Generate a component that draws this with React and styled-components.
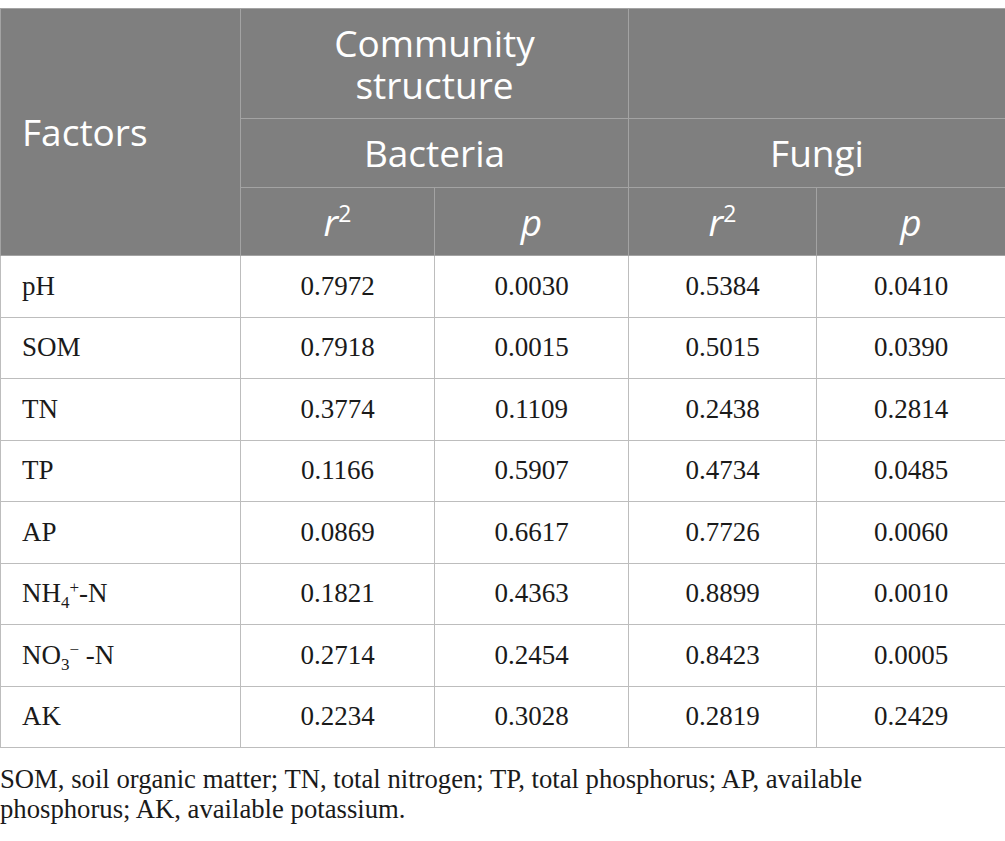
import React from "react";
import styled, { createGlobalStyle } from "styled-components";

const GlobalStyle = createGlobalStyle`
  html, body {
    margin: 0;
    padding: 0;
    background: #fff;
  }
`;

const Page = styled.div`
  padding-top: 8px;
  width: 1005px;
`;

const Table = styled.table`
  width: 1005px;
  table-layout: fixed;
  border-collapse: collapse;
`;

const HeadRow = styled.tr`
  height: ${(p) => p.height}px;
`;

const HeadCell = styled.th`
  background: #7f7f7f;
  color: #fff;
  font-family: "Open Sans", Lato, sans-serif;
  font-weight: 400;
  font-size: 37px;
  line-height: 42px;
  text-align: ${(p) => p.align || "center"};
  padding: 0 0 0 ${(p) => (p.align === "left" ? "21px" : "0")};
  border: 1px solid #a3a3a3;
  vertical-align: middle;
`;

const Italic = styled.i`
  font-style: italic;
`;

const HeadSup = styled.sup`
  font-size: 23px;
  line-height: 0;
  vertical-align: 14px;
`;

const BodyRow = styled.tr`
  height: 61.5px;
`;

const BodyCell = styled.td`
  font-family: "Liberation Serif", "Times New Roman", serif;
  font-size: 27px;
  color: #1a1a1a;
  text-align: ${(p) => p.align || "center"};
  padding: 0 0 0 ${(p) => (p.align === "left" ? "21px" : "0")};
  border: 1px solid #bdbdbd;
  vertical-align: middle;
`;

const Sub = styled.sub`
  font-size: 17px;
  line-height: 0;
  vertical-align: -6px;
`;

const Sup = styled.sup`
  font-size: 17px;
  line-height: 0;
  vertical-align: 9px;
`;

const Footnote = styled.p`
  margin: 16px 0 0;
  width: 900px;
  font-family: "Liberation Serif", "Times New Roman", serif;
  font-size: 26.7px;
  line-height: 30px;
  color: #1a1a1a;
`;

const rows = [
  { factor: "pH", values: ["0.7972", "0.0030", "0.5384", "0.0410"] },
  { factor: "SOM", values: ["0.7918", "0.0015", "0.5015", "0.0390"] },
  { factor: "TN", values: ["0.3774", "0.1109", "0.2438", "0.2814"] },
  { factor: "TP", values: ["0.1166", "0.5907", "0.4734", "0.0485"] },
  { factor: "AP", values: ["0.0869", "0.6617", "0.7726", "0.0060"] },
  {
    factor: (
      <>
        NH<Sub>4</Sub>
        <Sup>+</Sup>-N
      </>
    ),
    values: ["0.1821", "0.4363", "0.8899", "0.0010"],
  },
  {
    factor: (
      <>
        NO<Sub>3</Sub>
        <Sup>−</Sup> -N
      </>
    ),
    values: ["0.2714", "0.2454", "0.8423", "0.0005"],
  },
  { factor: "AK", values: ["0.2234", "0.3028", "0.2819", "0.2429"] },
];

function App() {
  return (
    <>
      <GlobalStyle />
      <Page>
        <Table>
          <colgroup>
            <col style={{ width: 240 }} />
            <col style={{ width: 194 }} />
            <col style={{ width: 194 }} />
            <col style={{ width: 188 }} />
            <col style={{ width: 189 }} />
          </colgroup>
          <thead>
            <HeadRow height={110}>
              <HeadCell rowSpan={3} align="left">
                Factors
              </HeadCell>
              <HeadCell colSpan={2}>
                Community
                <br />
                structure
              </HeadCell>
              <HeadCell colSpan={2} />
            </HeadRow>
            <HeadRow height={69}>
              <HeadCell colSpan={2}>Bacteria</HeadCell>
              <HeadCell colSpan={2}>Fungi</HeadCell>
            </HeadRow>
            <HeadRow height={68}>
              <HeadCell>
                <Italic>r</Italic>
                <HeadSup>2</HeadSup>
              </HeadCell>
              <HeadCell>
                <Italic>p</Italic>
              </HeadCell>
              <HeadCell>
                <Italic>r</Italic>
                <HeadSup>2</HeadSup>
              </HeadCell>
              <HeadCell>
                <Italic>p</Italic>
              </HeadCell>
            </HeadRow>
          </thead>
          <tbody>
            {rows.map((row, i) => (
              <BodyRow key={i}>
                <BodyCell align="left">{row.factor}</BodyCell>
                {row.values.map((v, j) => (
                  <BodyCell key={j}>{v}</BodyCell>
                ))}
              </BodyRow>
            ))}
          </tbody>
        </Table>
        <Footnote>
          SOM, soil organic matter; TN, total nitrogen; TP, total phosphorus;
          AP, available phosphorus; AK, available potassium.
        </Footnote>
      </Page>
    </>
  );
}

export default App;
